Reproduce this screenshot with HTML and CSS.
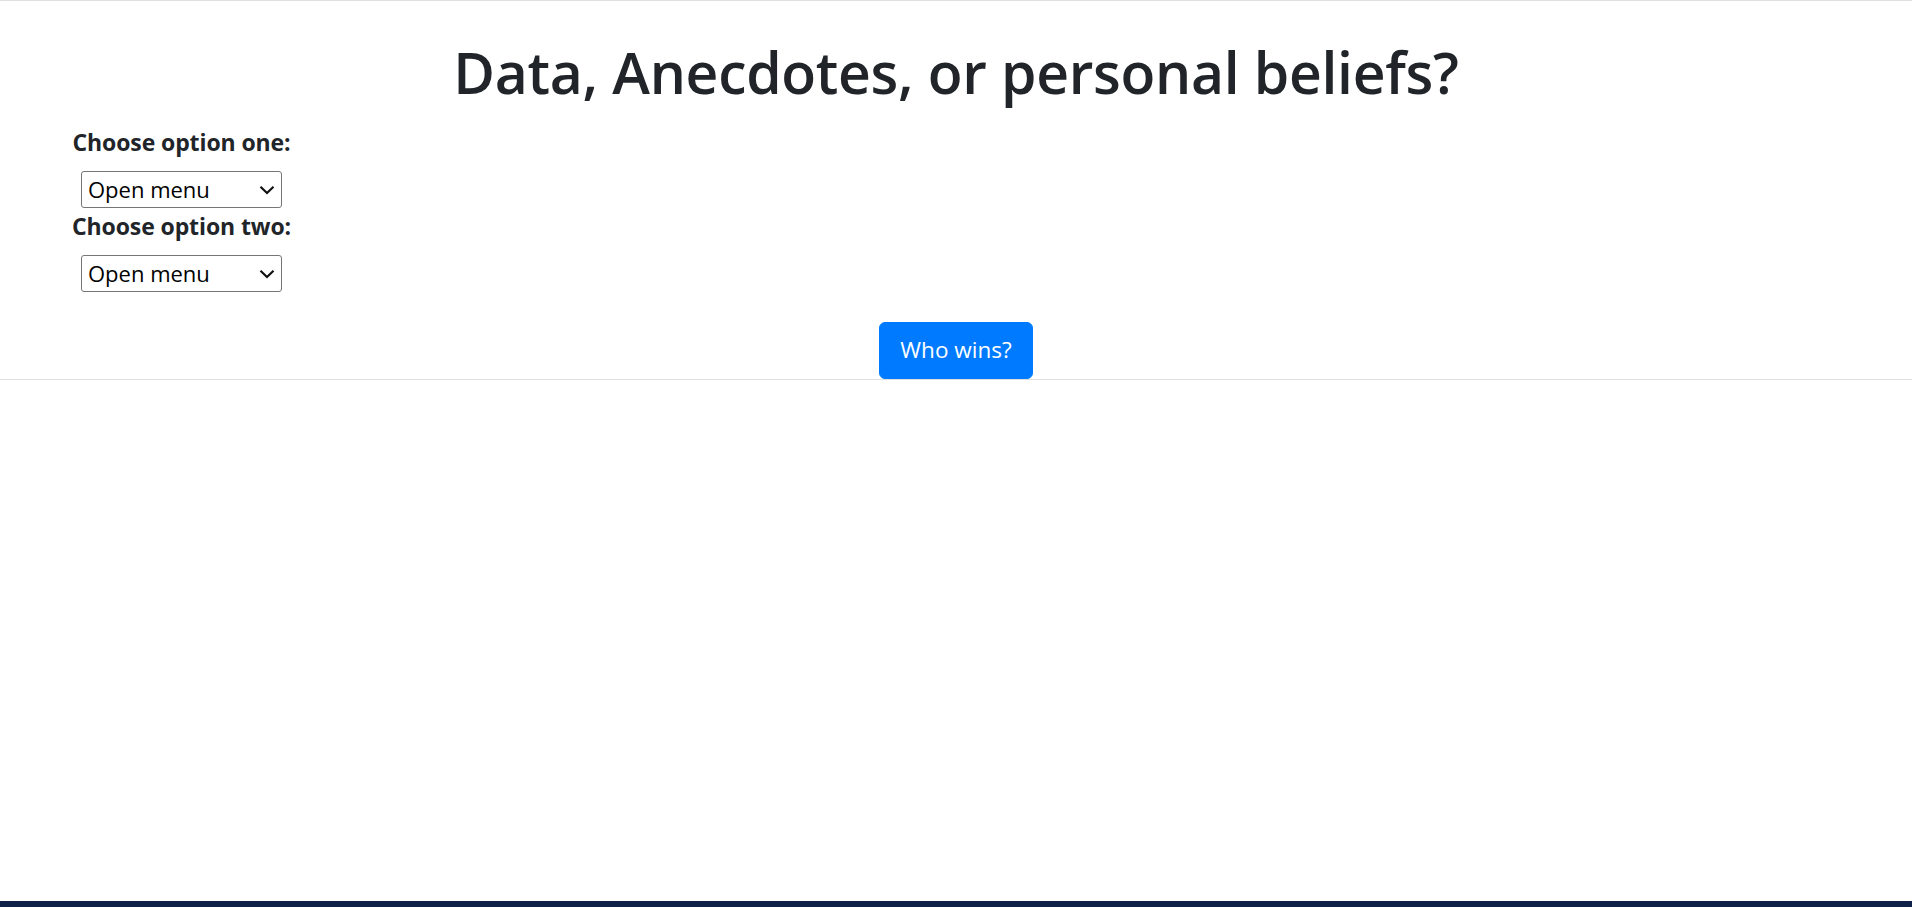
FILE: index.html
```html
<!DOCTYPE html>
<html lang="en">
<head>
<meta charset="utf-8">
<title>Data, Anecdotes, or personal beliefs?</title>
<link rel="stylesheet" href="styles.css">
</head>
<body>
<div class="page">
  <section class="panel">
    <h1 class="title">Data, Anecdotes, or personal beliefs?</h1>
    <div class="choices">
      <label class="choice-label" for="opt1">Choose option one:</label>
      <div class="select-wrap">
        <select id="opt1" class="choice-select"><option>Open menu</option></select>
        <svg class="chevron" width="16" height="10" viewBox="0 0 16 10"><path d="M1.5 1.8 L8 8 L14.5 1.8" fill="none" stroke="#111" stroke-width="2.2"/></svg>
      </div>
      <label class="choice-label" for="opt2">Choose option two:</label>
      <div class="select-wrap">
        <select id="opt2" class="choice-select"><option>Open menu</option></select>
        <svg class="chevron" width="16" height="10" viewBox="0 0 16 10"><path d="M1.5 1.8 L8 8 L14.5 1.8" fill="none" stroke="#111" stroke-width="2.2"/></svg>
      </div>
    </div>
    <div class="actions">
      <button class="btn-primary" type="button">Who wins?</button>
    </div>
  </section>
  <div class="spacer"></div>
  <footer class="footer-bar"></footer>
</div>
</body>
</html>
```

FILE: styles.css
```css
html, body {
  margin: 0;
  padding: 0;
  height: 100%;
}
body {
  font-family: "Open Sans", "Noto Sans", "Liberation Sans", sans-serif;
  color: #212529;
  background: #fff;
}
.page {
  display: flex;
  flex-direction: column;
  height: 907px;
}
.panel {
  border-top: 1px solid #dfdfdf;
  border-bottom: 1px solid #dfdfdf;
  height: 378px;
  display: flex;
  flex-direction: column;
}
.title {
  margin: 0;
  padding-top: 35px;
  font-size: 57px;
  font-weight: 600;
  line-height: 72px;
  text-align: center;
  letter-spacing: -0.3px;
  color: #212529;
}
.choices {
  width: 363px;
  display: flex;
  flex-direction: column;
  align-items: center;
  margin-top: 16px;
}
.choice-label {
  font-size: 23px;
  font-weight: 700;
  line-height: 36px;
  margin-bottom: 11px;
  letter-spacing: -0.1px;
}
.select-wrap {
  position: relative;
  width: 201px;
  height: 37px;
}
.choice-select {
  appearance: none;
  -webkit-appearance: none;
  width: 201px;
  height: 37px;
  margin: 0;
  box-sizing: border-box;
  border: 1px solid #767676;
  border-radius: 3px;
  background: #fff;
  font-family: "Open Sans", "Noto Sans", sans-serif;
  font-size: 22px;
  color: #000;
  padding: 0 0 2px 6px;
}
.chevron {
  position: absolute;
  left: 178px;
  top: 14px;
  pointer-events: none;
}
.actions {
  display: flex;
  justify-content: center;
  margin-top: 30px;
}
.btn-primary {
  background: #007bff;
  color: #fff;
  border: 1px solid #007bff;
  border-radius: 6px;
  font-family: "Open Sans", "Noto Sans", sans-serif;
  font-size: 22.5px;
  line-height: 36px;
  height: 57px;
  width: 154px;
  padding: 0 0 1px;
}
.spacer {
  flex: 1;
}
.footer-bar {
  height: 6px;
  background: #0f2049;
}
```
